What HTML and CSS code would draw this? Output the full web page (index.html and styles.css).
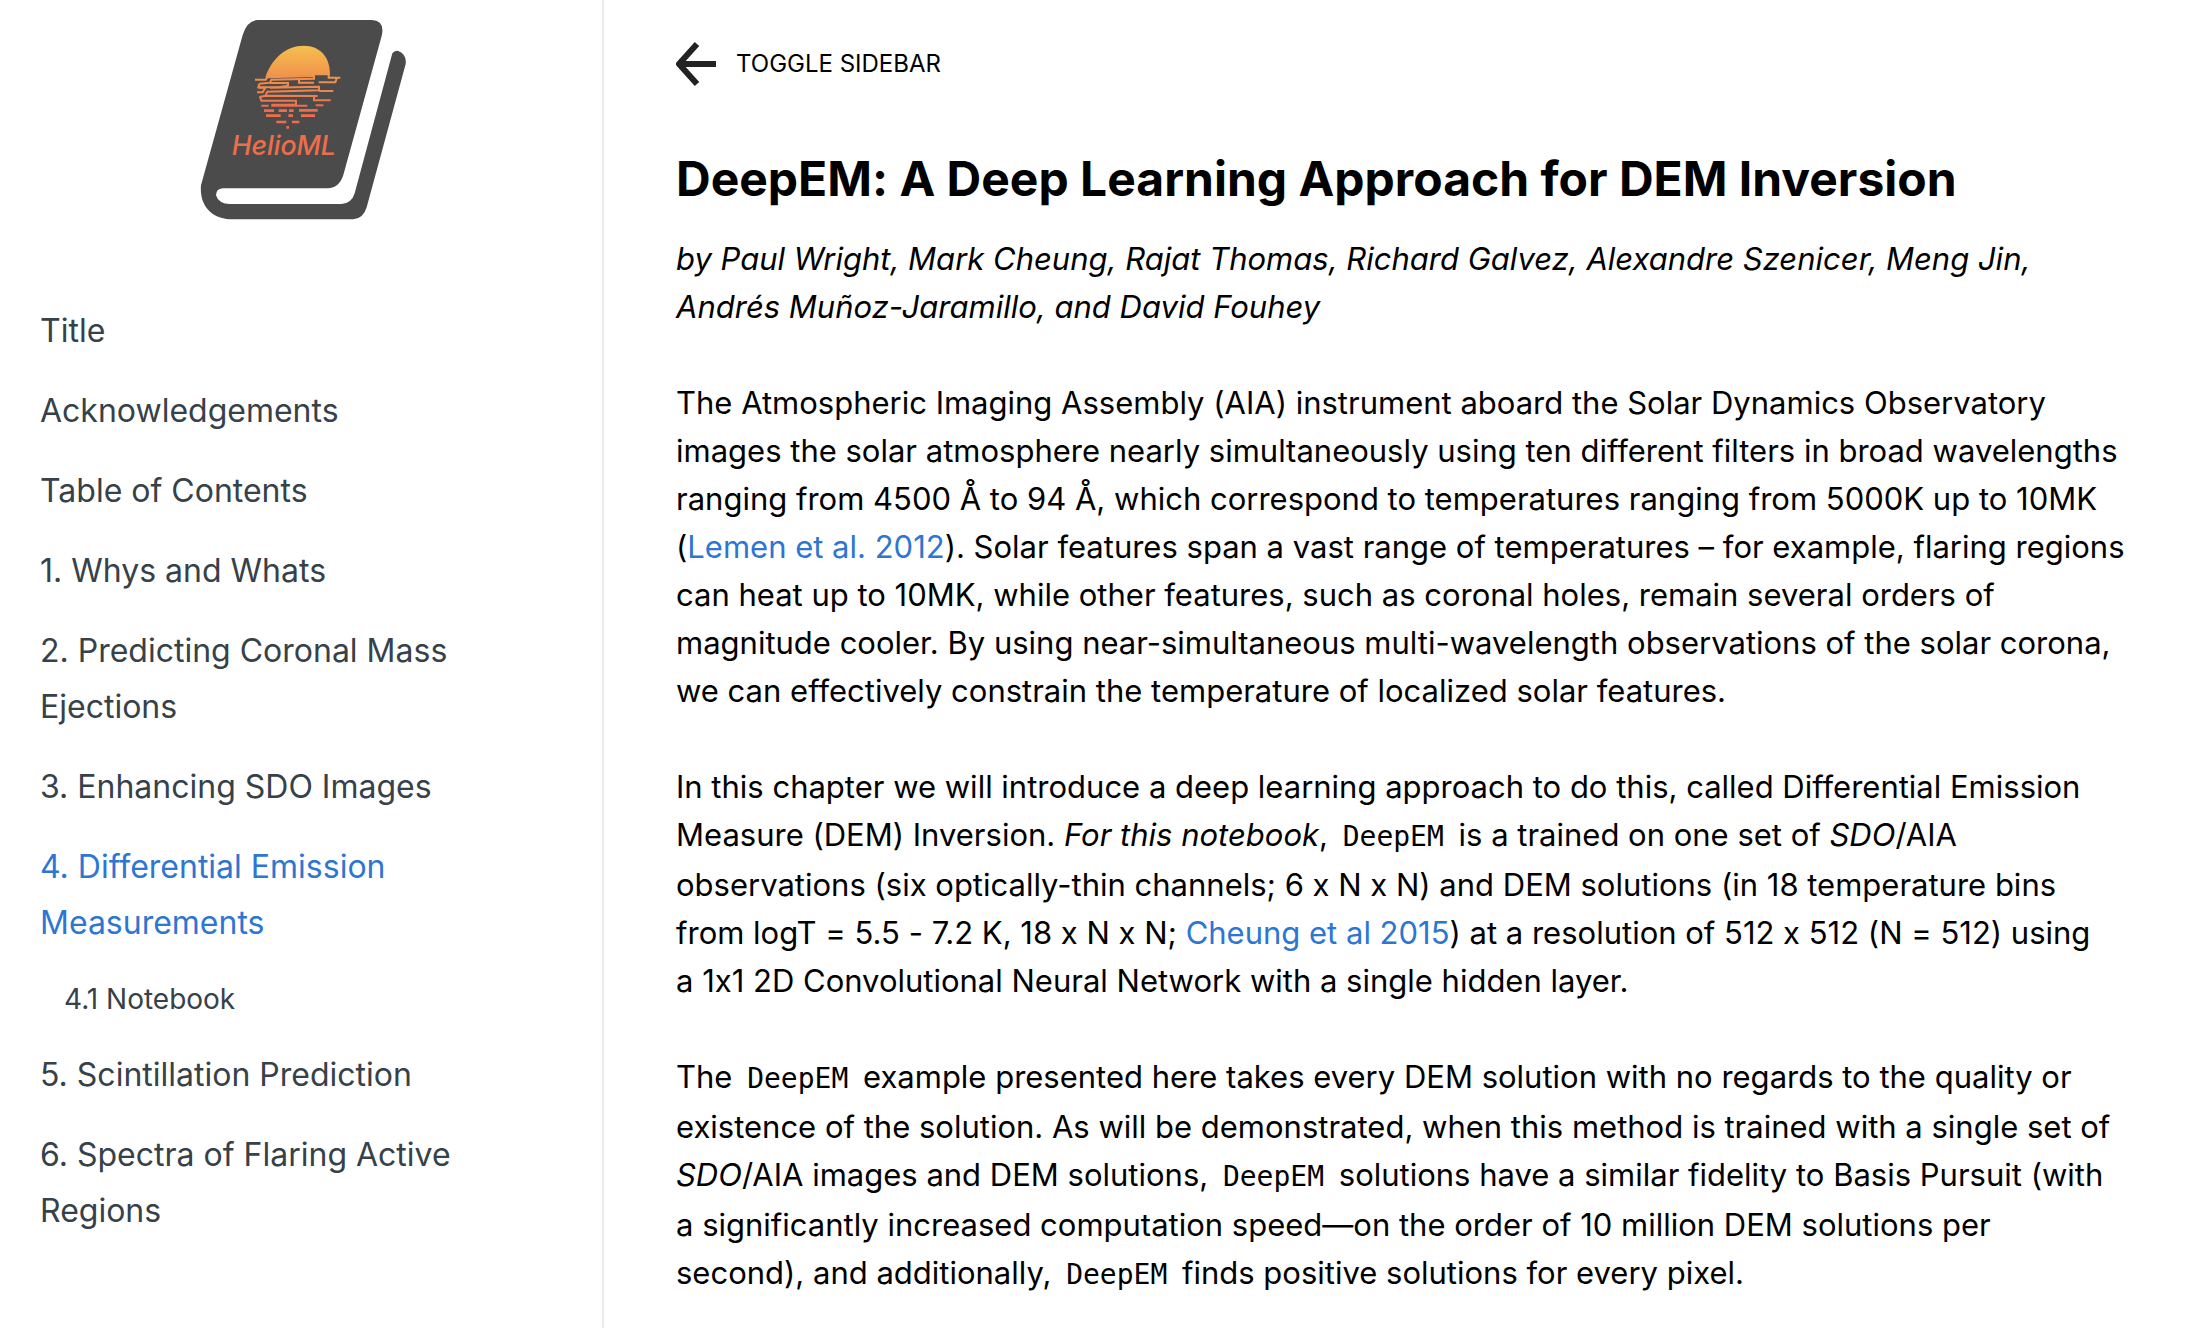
FILE: index.html
```html
<!DOCTYPE html>
<html lang="en">
<head>
<meta charset="utf-8">
<meta name="viewport" content="width=device-width, initial-scale=1">
<title>DeepEM: A Deep Learning Approach for DEM Inversion</title>
<link rel="stylesheet" href="styles.css">
</head>
<body>
<div class="page">
  <aside class="sidebar">
    <a class="logo" href="#" aria-label="HelioML">
      <svg class="logo-art" viewBox="-12 0 750 720" aria-hidden="true">
        <defs>
          <linearGradient id="sunset" gradientUnits="userSpaceOnUse" x1="0" y1="137" x2="0" y2="350">
            <stop offset="0" stop-color="#f5c04e"/>
            <stop offset="0.45" stop-color="#f0914c"/>
            <stop offset="1" stop-color="#ee6a4c"/>
          </linearGradient>
        </defs>
        <path fill="#4b4b4b" d="M232 60H575Q616 62 605 108L490 525Q478 563 443 565H128Q108 567 108 586Q116 612 150 612H485Q515 610 524 580L637 160Q644 150 655 153Q681 164 677 192L560 622Q550 656 520 658H150C90 655 58 612 63 556L188 105Q201 62 232 60Z"/>
        <path fill="url(#sunset)" d="M256 232C275 176 318 137 372 137C420 137 452 172 450 226L402 226Z"/>
        <g fill="none" stroke="url(#sunset)" stroke-width="6">
          <path d="M225 239H257L262 232L402 228V236L274 239L270 248L238 251"/>
          <path d="M238 251L235 262L300 261L324 257V249L270 249"/>
          <path d="M357 238V248H402M446 224V233H481M416 247H466L470 235"/>
          <path d="M235 263H256L248 277H231M270 263L417 260V271L262 275L257 286"/>
          <path d="M417 273H460M238 291L257 287L413 288M402 289V301H452"/>
          <path d="M240 291L244 302H348V314H274"/>
        </g>
        <path fill="#ee6e4c" d="M244 314h22v6h-22zM274 314h108v6h-108zM407 313h23v6h-23zM252 328h30v8h-30zM296 328h25v8h-25zM327 328h14v8h-14zM357 327h56v8h-56zM258 343h44v8h-44zM325 343h14v8h-14zM363 343h42v8h-42zM289 362h30v8h-30zM336 362h22v8h-22zM319 378h8v8h-8z"/>
        <text class="logo-word" x="155" y="464">HelioML</text>
      </svg>
    </a>
    <nav aria-label="Chapters">
      <ul class="chapters">
        <li><a class="chapter" href="#">Title</a></li>
        <li><a class="chapter" href="#">Acknowledgements</a></li>
        <li><a class="chapter" href="#">Table of Contents</a></li>
        <li><a class="chapter" href="#">1. Whys and Whats</a></li>
        <li><a class="chapter" href="#">2. Predicting Coronal Mass Ejections</a></li>
        <li><a class="chapter" href="#">3. Enhancing SDO Images</a></li>
        <li>
          <a class="chapter chapter-active" href="#" aria-current="page">4. Differential Emission Measurements</a>
          <ul class="sections">
            <li><a class="section-link" href="#">4.1 Notebook</a></li>
          </ul>
        </li>
        <li><a class="chapter" href="#">5. Scintillation Prediction</a></li>
        <li><a class="chapter" href="#">6. Spectra of Flaring Active Regions</a></li>
      </ul>
    </nav>
  </aside>
  <main class="content">
    <button class="toggle" type="button">
      <svg class="toggle-icon" viewBox="0 0 40 44" aria-hidden="true">
        <path d="M21 2L3 22L21 42M3 22H40" fill="none" stroke="#222" stroke-width="6" stroke-linejoin="round"/>
      </svg>
      <span>Toggle Sidebar</span>
    </button>
    <article class="article">
      <h1>DeepEM: A Deep Learning Approach for DEM Inversion</h1>
      <p><em>by Paul Wright, Mark Cheung, Rajat Thomas, Richard Galvez, Alexandre Szenicer, Meng Jin, Andrés Muñoz-Jaramillo, and David Fouhey</em></p>
      <p>The Atmospheric Imaging Assembly (AIA) instrument aboard the Solar Dynamics Observatory images the solar atmosphere nearly simultaneously using ten different filters in broad wavelengths ranging from 4500 Å to 94 Å, which correspond to temperatures ranging from 5000K up to 10MK (<a href="#">Lemen et al. 2012</a>). Solar features span a vast range of temperatures – for example, flaring regions can heat up to 10MK, while other features, such as coronal holes, remain several orders of magnitude cooler. By using near-simultaneous multi-wavelength observations of the solar corona, we can effectively constrain the temperature of localized solar features.</p>
      <p>In this chapter we will introduce a deep learning approach to do this, called Differential Emission Measure (DEM) Inversion. <em>For this notebook</em>, <code>DeepEM</code> is a trained on one set of <em>SDO</em>/AIA observations (six optically-thin channels; 6 x N x N) and DEM solutions (in 18 temperature bins from logT = 5.5 - 7.2 K, 18 x N x N; <a href="#">Cheung et al 2015</a>) at a resolution of 512 x 512 (N = 512) using a&nbsp;1x1 2D Convolutional Neural Network with a single hidden layer.</p>
      <p>The <code>DeepEM</code> example presented here takes every DEM solution with no regards to the quality or existence of the solution. As will be demonstrated, when this method is trained with a single set of <em>SDO</em>/AIA images and DEM solutions, <code>DeepEM</code> solutions have a similar fidelity to Basis Pursuit (with a significantly increased computation speed—on the order of 10 million DEM solutions per second), and additionally, <code>DeepEM</code> finds positive solutions for every pixel.</p>
    </article>
  </main>
</div>
</body>
</html>
```
FILE: styles.css
```css
*,
*::before,
*::after {
  box-sizing: border-box;
}

body {
  margin: 0;
  background: #fff;
  color: #000;
  font-family: Inter, "Liberation Sans", sans-serif;
  font-size: 32px;
  font-variant-ligatures: no-contextual;
  line-height: 48px;
}

a {
  color: #2d76d2;
  text-decoration: none;
}

.page {
  display: flex;
  min-height: 100vh;
}

.sidebar {
  flex: 0 0 604px;
  border-right: 2px solid #ebebeb;
}

.logo {
  display: flex;
  justify-content: center;
  margin-bottom: 51px;
}

.logo-art {
  width: 250px;
  height: 240px;
}

.logo-word {
  fill: #ee6e4c;
  font-family: Inter, "Liberation Sans", sans-serif;
  font-size: 80px;
  font-style: italic;
  font-weight: 500;
}

.chapters,
.sections {
  margin: 0;
  padding: 0;
  list-style: none;
}

.chapter,
.section-link {
  display: block;
  padding: 12px 120px 12px 40px;
  color: #364149;
  line-height: 56px;
}

.chapter-active {
  color: #2d76d2;
}

.section-link {
  padding-left: 64px;
  font-size: 28px;
  line-height: 48px;
}

.content {
  flex: 1;
  min-width: 0;
  padding: 40px 60px 0 72px;
}

.toggle {
  display: flex;
  align-items: center;
  gap: 20px;
  padding: 0;
  border: 0;
  background: none;
  color: #000;
  font: inherit;
  font-size: 24px;
  text-transform: uppercase;
  cursor: pointer;
}

.toggle-icon {
  width: 40px;
  height: 44px;
}

.article {
  margin-top: 59px;
  font-size: 31px;
}

h1 {
  margin: 0 0 24px;
  font-size: 48px;
  font-weight: 700;
  line-height: 64px;
}

p {
  margin: 0 0 48px;
}

code {
  padding: 0 6px;
  font-family: "DejaVu Sans Mono", monospace;
  font-size: 28px;
}
```
